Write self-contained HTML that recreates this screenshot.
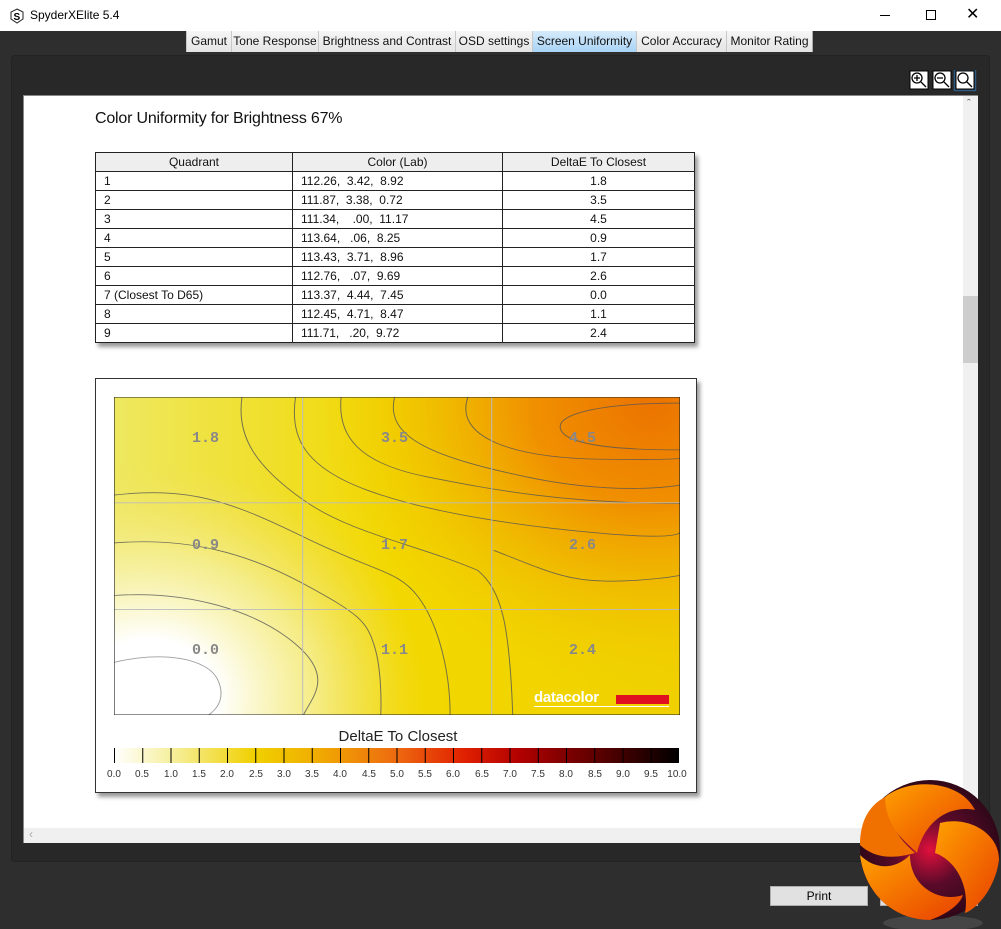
<!DOCTYPE html>
<html><head><meta charset="utf-8"><style>
*{margin:0;padding:0;box-sizing:border-box}
body{width:1001px;height:929px;background:#2e2e2e;font-family:"Liberation Sans",sans-serif;position:relative;overflow:hidden}
.abs{position:absolute}
#title{left:0;top:0;width:1001px;height:31px;background:#fff}
#title .t{left:30px;top:8px;font-size:12px;color:#000}
.tab{position:absolute;top:31px;height:21px;background:linear-gradient(#f6f6f6,#e4e4e4);border-left:1px solid #c8c8c8;font-size:12px;line-height:21px;text-align:center;color:#111}
#panel{left:11px;top:55px;width:979px;height:807px;background:#282828;border-radius:4px;border:1px solid #222}
#pane{left:23px;top:95px;width:955px;height:748px;background:#fff;border:1px solid #888}
table{border-collapse:collapse;font-size:12px;color:#111}
td,th{border:1px solid #222;height:19px;padding:0 8px;font-weight:normal}
th{background:#eee;text-align:center}
</style></head><body>
<div id="title" class="abs">
 <svg class="abs" style="left:9px;top:8px" width="16" height="16"><path d="M8 1 L14 4 V11 L8 15 L2 11 V4Z" fill="#fff" stroke="#222"/><text x="4.5" y="12" font-size="10" font-weight="bold" font-family="Liberation Sans">S</text></svg>
 <div class="abs t">SpyderXElite 5.4</div>
 <div class="abs" style="left:880px;top:15px;width:10px;height:1px;background:#000"></div>
 <div class="abs" style="left:926px;top:10px;width:10px;height:10px;border:1px solid #000"></div>
 <div class="abs" style="left:966px;top:4px;font-size:16px;color:#000">✕</div>
</div>
<div class="tab" style="left:186px;width:45px">Gamut</div>
<div class="tab" style="left:231px;width:87px">Tone Response</div>
<div class="tab" style="left:318px;width:137px">Brightness and Contrast</div>
<div class="tab" style="left:455px;width:77px">OSD settings</div>
<div class="tab" style="left:532px;width:104px;background:linear-gradient(#d6ebfb,#a9d3f5)">Screen Uniformity</div>
<div class="tab" style="left:636px;width:90px">Color Accuracy</div>
<div class="tab" style="left:726px;width:87px;border-right:1px solid #aaa">Monitor Rating</div>
<div id="panel" class="abs"></div>
<svg class="abs" style="left:909px;top:70px" width="70" height="22">
 <g fill="#fff" stroke="#000"><rect x="1" y="1" width="18" height="18"/><rect x="24" y="1" width="18" height="18"/><rect x="47" y="1" width="18" height="18"/></g>
 <rect x="45.5" y="-0.5" width="21" height="21" fill="none" stroke="#2c5a80" stroke-width="1.5"/>
 <g fill="none" stroke="#000" stroke-width="1.3"><circle cx="8" cy="8" r="5"/><path d="M12 12l5 5M5 8h6M8 5v6"/><circle cx="31" cy="8" r="5"/><path d="M35 12l5 5M28 8h6"/><circle cx="54" cy="8" r="5"/><path d="M58 12l5 5"/></g>
</svg>
<div id="pane" class="abs">
 <div class="abs" style="left:939px;top:0;width:15px;height:732px;background:#f0f0f0"></div>
 <div class="abs" style="left:939px;top:200px;width:15px;height:67px;background:#cdcdcd"></div>
 <div class="abs" style="left:943px;top:2px;font-size:11px;color:#555">&#710;</div>
 <div class="abs" style="left:0;top:732px;width:939px;height:15px;background:#f0f0f0"></div>
 <div class="abs" style="left:5px;top:731px;font-size:12px;color:#aaa">&lsaquo;</div>
</div>
<div class="abs" style="left:95px;top:110px;font-size:16px;color:#111;letter-spacing:-.2px">Color Uniformity for Brightness 67%</div>
<table class="abs" style="left:95px;top:152px;width:600px;box-shadow:3px 4px 4px #999">
<tr><th style="width:197px">Quadrant</th><th style="width:210px">Color (Lab)</th><th>DeltaE To Closest</th></tr>
<tr><td>1</td><td>112.26,&nbsp; 3.42,&nbsp; 8.92</td><td align="center">1.8</td></tr>
<tr><td>2</td><td>111.87,&nbsp; 3.38,&nbsp; 0.72</td><td align="center">3.5</td></tr>
<tr><td>3</td><td>111.34,&nbsp;&nbsp;&nbsp; .00,&nbsp; 11.17</td><td align="center">4.5</td></tr>
<tr><td>4</td><td>113.64,&nbsp;&nbsp; .06,&nbsp; 8.25</td><td align="center">0.9</td></tr>
<tr><td>5</td><td>113.43,&nbsp; 3.71,&nbsp; 8.96</td><td align="center">1.7</td></tr>
<tr><td>6</td><td>112.76,&nbsp;&nbsp; .07,&nbsp; 9.69</td><td align="center">2.6</td></tr>
<tr><td>7 (Closest To D65)</td><td>113.37,&nbsp; 4.44,&nbsp; 7.45</td><td align="center">0.0</td></tr>
<tr><td>8</td><td>112.45,&nbsp; 4.71,&nbsp; 8.47</td><td align="center">1.1</td></tr>
<tr><td>9</td><td>111.71,&nbsp;&nbsp; .20,&nbsp; 9.72</td><td align="center">2.4</td></tr>
</table>
<div class="abs" style="left:95px;top:378px;width:602px;height:415px;border:1px solid #333;background:#fff;box-shadow:3px 4px 4px #999"></div>
<svg class="abs" style="left:114px;top:397px" width="566" height="318" viewBox="62 82 1428 950" preserveAspectRatio="none">
<defs>
 <radialGradient id="w" cx="150" cy="980" r="700" gradientUnits="userSpaceOnUse"><stop offset="0" stop-color="#fff"/><stop offset=".25" stop-color="#fff"/><stop offset=".6" stop-color="#f6f0a0" stop-opacity=".8"/><stop offset="1" stop-color="#f2e060" stop-opacity="0"/></radialGradient>
 <radialGradient id="o" cx="1420" cy="110" r="1000" gradientUnits="userSpaceOnUse"><stop offset="0" stop-color="#ec7400"/><stop offset=".3" stop-color="#f09000"/><stop offset=".55" stop-color="#f0b800" stop-opacity=".8"/><stop offset=".85" stop-color="#f0d000" stop-opacity="0"/></radialGradient>
 <linearGradient id="l" x1="0" x2="1"><stop offset="0" stop-color="#eee860"/><stop offset=".5" stop-color="#f2d800"/><stop offset="1" stop-color="#f0d000"/></linearGradient>
</defs>
<rect x="62" y="82" width="1428" height="950" fill="url(#l)"/>
<rect x="62" y="82" width="1428" height="950" fill="url(#o)"/>
<rect x="62" y="82" width="1428" height="950" fill="url(#w)"/>
<g fill="none" stroke="#555" stroke-width="2.5" opacity=".8">
<path d="M385 82C370 200 420 290 540 390S820 520 980 600C1040 660 1060 760 1068 1032"/>
<path d="M520 82C505 200 540 290 700 360S1100 470 1300 490 1490 485 1490 485"/>
<path d="M635 82C625 200 680 280 850 320S1200 400 1490 400"/>
<path d="M770 82C745 200 860 260 1100 320S1490 345 1490 345"/>
<path d="M955 82C920 200 1060 265 1300 268S1490 262 1490 262"/>
<path d="M1490 100C1300 100 1180 130 1188 175S1300 240 1490 240"/>
<path d="M62 375C250 350 350 390 540 500S780 600 830 680 910 900 910 1032"/>
<path d="M62 518C250 500 400 550 540 640S700 750 720 830 735 1032 735 1032"/>
<path d="M62 675C250 660 420 720 520 820S560 980 540 1032"/>
<path d="M1020 540C1150 600 1200 630 1300 632S1490 615 1490 615"/>
<path d="M62 875C180 840 300 860 325 930S300 1032 300 1032" stroke="#888"/>
</g>
<g stroke="#bbb" stroke-width="2.5"><path d="M538 82V1032M1015 82V1032M62 398H1490M62 717H1490"/></g>
<rect x="62" y="82" width="1428" height="950" fill="none" stroke="#222" stroke-width="3"/>
</svg>
<div class="abs" style="left:114px;top:397px;width:566px;height:318px;font:bold 15px 'Liberation Mono',monospace;color:#888">
 <span class="abs" style="left:78px;top:33px">1.8</span><span class="abs" style="left:267px;top:33px">3.5</span><span class="abs" style="left:455px;top:33px">4.5</span>
 <span class="abs" style="left:78px;top:140px">0.9</span><span class="abs" style="left:267px;top:140px">1.7</span><span class="abs" style="left:455px;top:140px">2.6</span>
 <span class="abs" style="left:78px;top:245px">0.0</span><span class="abs" style="left:267px;top:245px">1.1</span><span class="abs" style="left:455px;top:245px">2.4</span>
 <span class="abs" style="left:420px;top:292px;font:bold 15px 'Liberation Sans',sans-serif;color:#fff;letter-spacing:-.3px">datacolor</span>
 <div class="abs" style="left:502px;top:298px;width:53px;height:9px;background:#e01020"></div>
 <div class="abs" style="left:420px;top:309px;width:135px;height:1px;background:#fff"></div>
</div>
<div class="abs" style="left:300px;top:728px;width:196px;text-align:center;font-size:15px;color:#222">DeltaE To Closest</div>
<svg class="abs" style="left:100px;top:746px" width="600" height="36">
<defs><linearGradient id="cb" x1="14" x2="579" gradientUnits="userSpaceOnUse"><stop offset="0" stop-color="#fff"/><stop offset=".1" stop-color="#f6f0a0"/><stop offset=".25" stop-color="#f0d000"/><stop offset=".35" stop-color="#f0b000"/><stop offset=".5" stop-color="#ee6a10"/><stop offset=".62" stop-color="#e02000"/><stop offset=".72" stop-color="#b00000"/><stop offset=".85" stop-color="#600000"/><stop offset="1" stop-color="#000"/></linearGradient></defs>
<rect x="14" y="2" width="565" height="15" fill="url(#cb)"/>
<g stroke="#000" stroke-width="1">
<path d="M14.5 2v15M42.75 2v15M71 2v15M99.25 2v15M127.5 2v15M155.75 2v15M184 2v15M212.25 2v15M240.5 2v15M268.75 2v15M297 2v15M325.25 2v15M353.5 2v15M381.75 2v15M410 2v15M438.25 2v15M466.5 2v15M494.75 2v15M523 2v15M551.25 2v15"/></g>
<g font-family="Liberation Sans" font-size="10" fill="#333" text-anchor="middle">
<text x="14" y="31">0.0</text><text x="42" y="31">0.5</text><text x="71" y="31">1.0</text><text x="99" y="31">1.5</text><text x="127" y="31">2.0</text><text x="156" y="31">2.5</text><text x="184" y="31">3.0</text><text x="212" y="31">3.5</text><text x="240" y="31">4.0</text><text x="269" y="31">4.5</text><text x="297" y="31">5.0</text><text x="325" y="31">5.5</text><text x="353" y="31">6.0</text><text x="382" y="31">6.5</text><text x="410" y="31">7.0</text><text x="438" y="31">7.5</text><text x="466" y="31">8.0</text><text x="495" y="31">8.5</text><text x="523" y="31">9.0</text><text x="551" y="31">9.5</text><text x="577" y="31">10.0</text></g>
</svg>
<div class="abs" style="left:770px;top:886px;width:98px;height:20px;background:#e1e1e1;border:1px solid #adadad;font-size:12px;text-align:center;line-height:18px;color:#000">Print</div>
<div class="abs" style="left:880px;top:886px;width:98px;height:20px;background:#e1e1e1;border:1px solid #adadad"></div>
<svg class="abs" style="left:855px;top:775px" width="146" height="154">
<defs><radialGradient id="lg" cx=".5" cy=".5" r=".5"><stop offset="0" stop-color="#e0103c"/><stop offset=".5" stop-color="#5a0a2a"/><stop offset="1" stop-color="#300818"/></radialGradient>
<linearGradient id="og" x1="0" y1="0" x2="1" y2="1"><stop offset="0" stop-color="#ffa000"/><stop offset="1" stop-color="#e84000"/></linearGradient></defs>
<ellipse cx="78" cy="148" rx="50" ry="8" fill="#555" opacity=".6"/>
<circle cx="75" cy="75" r="70" fill="url(#lg)"/>
<path d="M30 22C55 2 105 5 120 35 95 30 70 45 62 78 45 62 25 45 30 22Z" fill="url(#og)"/>
<path d="M85 48C115 40 145 60 144 85 140 115 120 135 110 138 115 110 100 85 80 78Z" fill="url(#og)"/>
<path d="M5 80C10 120 40 145 75 145 90 140 105 130 108 120 85 128 55 112 55 80 40 95 20 95 5 80Z" fill="url(#og)"/>
<path d="M5 70C5 45 15 30 30 22 30 45 45 65 60 78 35 85 18 82 5 70Z" fill="#f07000"/>
</svg>
</body></html>
